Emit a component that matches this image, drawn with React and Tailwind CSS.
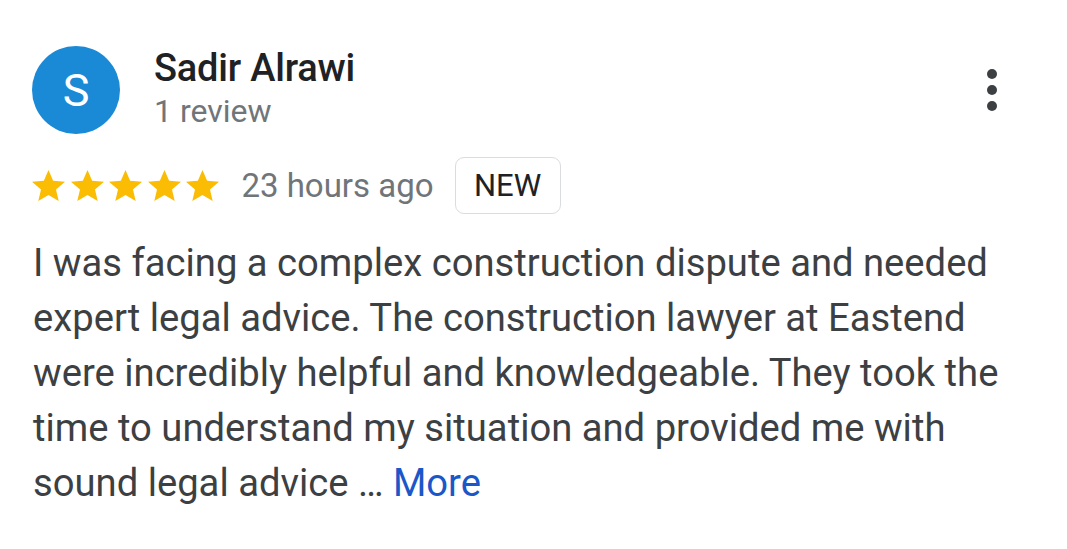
export default function App() {
    const stars = [0, 1, 2, 3, 4];

    return (
        <div className="w-[1067px] h-[549px] bg-white overflow-hidden font-['Roboto',sans-serif]">
            <div className="flex items-start pl-[32px] pt-[46px] pr-[70px]">
                <div className="w-[88px] h-[88px] rounded-full bg-[#1a8ad6] flex items-center justify-center text-white text-[45px] leading-none shrink-0">
                    S
                </div>
                <div className="ml-[34px] flex flex-col flex-1">
                    <div className="text-[38px] font-medium text-[#202124] leading-[40px] mt-[2px] tracking-[-0.2px]">Sadir Alrawi</div>
                    <div className="text-[32px] text-[#70757a] leading-[36px] mt-[5px]">1 review</div>
                </div>
                <div className="flex flex-col items-center gap-[6px] mt-[23px] w-[10px]">
                    <span className="w-[10px] h-[10px] rounded-full bg-[#3c4043]"></span>
                    <span className="w-[10px] h-[10px] rounded-full bg-[#3c4043]"></span>
                    <span className="w-[10px] h-[10px] rounded-full bg-[#3c4043]"></span>
                </div>
            </div>

            <div className="flex items-center pl-[32px] mt-[23px]">
                <div className="flex items-center gap-[5.6px]">
                    {stars.map((i) => (
                        <svg key={i} width="33" height="31" viewBox="2 2 20 19" preserveAspectRatio="none" className="shrink-0">
                            <path fill="#fbbc04" d="M12 17.27L18.18 21l-1.64-7.03L22 9.24l-7.19-.61L12 2 9.19 8.63 2 9.24l5.46 4.73L5.82 21z" />
                        </svg>
                    ))}
                </div>
                <span className="ml-[22px] text-[33px] text-[#70757a] leading-none">23 hours ago</span>
                <span className="ml-[21px] h-[57px] w-[106px] flex items-center justify-center border-[1.5px] border-[#dadce0] rounded-[9px] text-[31px] text-[#202124] leading-none">
                    NEW
                </span>
            </div>

            <p className="pl-[33px] mt-[22px] text-[38.2px] leading-[55px] text-[#3c4043] whitespace-nowrap">
                I was facing a complex construction dispute and needed<br />
                expert legal advice. The construction lawyer at Eastend<br />
                were incredibly helpful and knowledgeable. They took the<br />
                time to understand my situation and provided me with<br />
                sound legal advice … <span className="text-[#1a57c9]">More</span>
            </p>
        </div>
    );
}
